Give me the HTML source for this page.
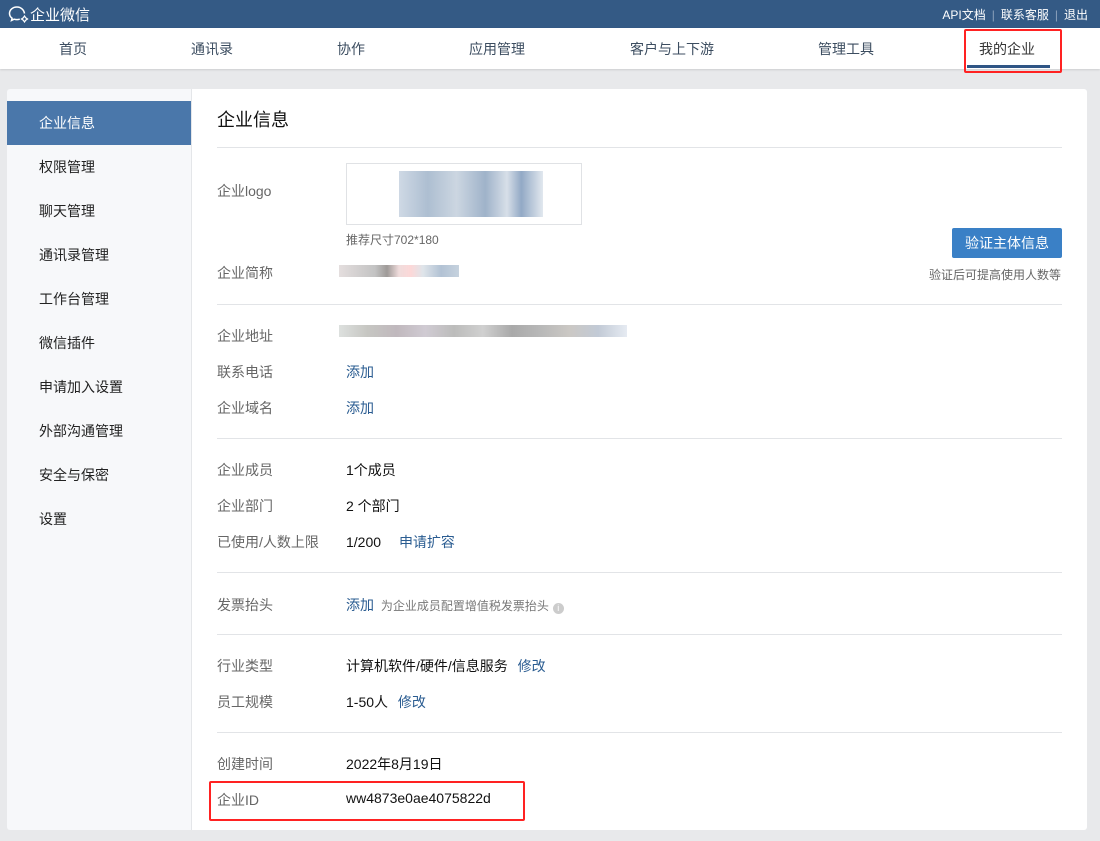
<!DOCTYPE html>
<html><head><meta charset="utf-8"><style>
*{margin:0;padding:0;box-sizing:border-box}
body{width:1100px;height:841px;background:#e8e9eb;font-family:"Liberation Sans","Noto Sans CJK SC",sans-serif;font-size:14px;color:#000;position:relative;overflow:hidden}
.top{position:absolute;left:0;top:0;width:1100px;height:28px;background:#345a85;color:#fff}
.logo{position:absolute;left:8px;top:4px;font-size:15px}
.tr{position:absolute;right:12px;top:6px;font-size:12px}
.tr span.s{color:#8aa0bb;margin:0 6px}
.nav{position:absolute;left:0;top:28px;width:1100px;height:41px;background:#fff;box-shadow:0 1px 2px rgba(0,0,0,.12)}
.nav div{position:absolute;top:11px;font-size:14px;color:#3c4d60;transform:translateX(-50%)}
.ul{position:absolute;left:967px;top:65px;width:83px;height:3px;background:#2f5585}
.red{position:absolute;border:2px solid #f22;border-radius:2px}
.side{position:absolute;left:7px;top:89px;width:185px;height:741px;background:#f7f8fa;border-radius:3px 0 0 3px;border-right:1px solid #e4e6e9}
.side div{position:absolute;left:32px;font-size:14px;color:#222}
.side .act{left:0;top:12px;width:184px;height:44px;background:#4a77aa;color:#fff;padding:12px 0 0 32px}
.main{position:absolute;left:192px;top:89px;width:895px;height:741px;background:#fff;border-radius:0 3px 3px 0}
.t{position:absolute;font-size:14px;white-space:nowrap}
.l{color:#666;left:25px}
.v{left:154px;color:#111}
.a{color:#2a5c91}
.hr{position:absolute;left:25px;width:845px;height:1px;background:#e2e4e7}
.blur{position:absolute;height:12px}
</style></head><body>
<div class="top"><div class="logo"><svg width="22" height="18" viewBox="0 0 22 18" style="vertical-align:-3px"><path d="M9 2C4.5 2 1.5 5 1.5 8.5c0 2 1 3.6 2.6 4.7l-.6 2.3 2.6-1.3c1 .3 1.9.4 2.900.4 1 0 1.900-.2 2.800-.4" fill="none" stroke="#fff" stroke-width="1.5"/><path d="M16.5 8.5C16 5 13 2 9 2" fill="none" stroke="#fff" stroke-width="1.5"/><path d="M16.5 11l1.2 1.8 1.8 1.2-1.8 1.2-1.2 1.8-1.2-1.8-1.8-1.2 1.8-1.2z" fill="none" stroke="#fff" stroke-width="1.2"/></svg>企业微信</div>
<div class="tr">API文档<span class="s">|</span>联系客服<span class="s">|</span>退出</div></div>
<div class="nav">
<div style="left:73px">首页</div><div style="left:212px">通讯录</div><div style="left:351px">协作</div><div style="left:497px">应用管理</div><div style="left:672px">客户与上下游</div><div style="left:846px">管理工具</div><div style="left:1007px;color:#333">我的企业</div>
</div>
<div class="ul"></div>
<div class="red" style="left:964px;top:29px;width:98px;height:44px"></div>
<div class="side">
<div class="act">企业信息</div>
<div style="top:68px">权限管理</div><div style="top:112px">聊天管理</div><div style="top:156px">通讯录管理</div><div style="top:200px">工作台管理</div><div style="top:244px">微信插件</div><div style="top:288px">申请加入设置</div><div style="top:332px">外部沟通管理</div><div style="top:376px">安全与保密</div><div style="top:420px">设置</div>
</div>
<div class="main">
<div class="t" style="left:25px;top:17px;font-size:18px;color:#111">企业信息</div>
<div class="hr" style="top:58px"></div>
<div class="t l" style="top:92px">企业logo</div>
<div style="position:absolute;left:154px;top:74px;width:236px;height:62px;border:1px solid #e0e2e5"></div>
<div style="position:absolute;left:207px;top:82px;width:144px;height:46px;background:linear-gradient(90deg,#c6d2e0,#9fb3c9 20%,#c3cfdc 40%,#8ea5c0 60%,#d0d9e4 75%,#7f9abb 85%,#dde4ec);opacity:.85"></div>
<div class="t" style="left:154px;top:142px;font-size:12px;color:#666">推荐尺寸702*180</div>
<div class="t l" style="top:174px">企业简称</div>
<div class="blur" style="left:147px;top:176px;width:120px;background:linear-gradient(90deg,#e4dede,#c3c3c3 30%,#9e9a98 40%,#f0dcdc 50%,#fcd8d8 60%,#dfe5ea 70%,#b2c2d4 85%,#c6d2de)"></div>
<div class="hr" style="top:215px"></div>
<div class="t l" style="top:237px">企业地址</div>
<div class="blur" style="left:147px;top:236px;width:288px;background:linear-gradient(90deg,#dde0de,#c6c6c2 10%,#c0b8bd 20%,#d0cbd3 30%,#bcbcbb 40%,#d0d0d0 50%,#a9a9a9 60%,#b8b8b8 70%,#cbc8c4 80%,#c2cad6 90%,#e6ebf2)"></div>
<div class="t l" style="top:273px">联系电话</div><div class="t v a" style="top:273px">添加</div>
<div class="t l" style="top:309px">企业域名</div><div class="t v a" style="top:309px">添加</div>
<div class="hr" style="top:349px"></div>
<div class="t l" style="top:371px">企业成员</div><div class="t v" style="top:371px">1个成员</div>
<div class="t l" style="top:407px">企业部门</div><div class="t v" style="top:407px">2 个部门</div>
<div class="t l" style="top:443px">已使用/人数上限</div><div class="t v" style="top:443px">1/200 <span class="a" style="margin-left:14px">申请扩容</span></div>
<div class="hr" style="top:483px"></div>
<div class="t l" style="top:506px">发票抬头</div><div class="t v" style="top:506px"><span class="a">添加</span> <span style="font-size:12px;color:#777;margin-left:3px">为企业成员配置增值税发票抬头</span> <span style="display:inline-block;width:11px;height:11px;border-radius:50%;background:#ccc;color:#fff;font-size:9px;text-align:center;line-height:11px;vertical-align:-1px">i</span></div>
<div class="hr" style="top:545px"></div>
<div class="t l" style="top:567px">行业类型</div><div class="t v" style="top:567px">计算机软件/硬件/信息服务 <span class="a" style="margin-left:6px">修改</span></div>
<div class="t l" style="top:603px">员工规模</div><div class="t v" style="top:603px">1-50人 <span class="a" style="margin-left:6px">修改</span></div>
<div class="hr" style="top:643px"></div>
<div class="t l" style="top:665px">创建时间</div><div class="t v" style="top:665px">2022年8月19日</div>
<div class="t l" style="top:701px">企业ID</div><div class="t v" style="top:701px">ww4873e0ae4075822d</div>
<div style="position:absolute;left:760px;top:139px;width:110px;height:30px;background:#3a80c6;border-radius:2px;color:#fff;font-size:14px;text-align:center;line-height:30px">验证主体信息</div>
<div class="t" style="left:737px;top:177px;font-size:12px;color:#666">验证后可提高使用人数等</div>
</div>
<div class="red" style="left:209px;top:781px;width:316px;height:40px"></div>
</body></html>
